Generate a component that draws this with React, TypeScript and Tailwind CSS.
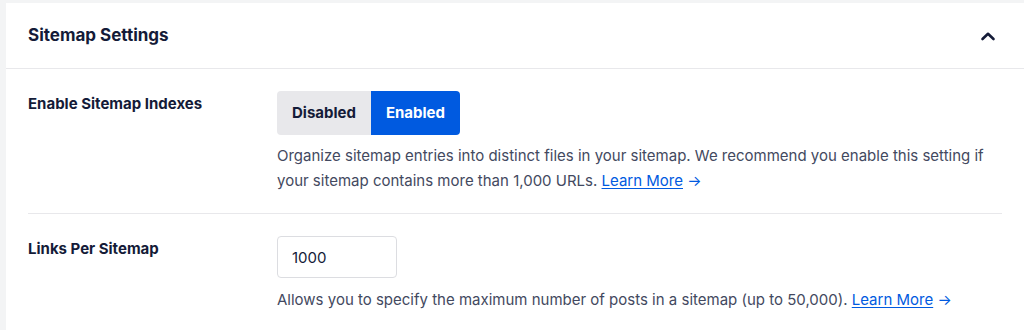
import React from 'react';

const font = { fontFamily: 'Inter, "Noto Sans", sans-serif' };

const LearnMore: React.FC = () => (
  <>
    <a href="#" className="text-[#005ae0] underline underline-offset-2">
      Learn More
    </a>{' '}
    <span className="text-[#005ae0]">→</span>
  </>
);

const SettingRow: React.FC<{ label: string; last?: boolean; children: React.ReactNode }> = ({
  label,
  last,
  children,
}) => (
  <div className={`grid grid-cols-[249px_1fr] ${last ? 'pt-[22px] pb-6' : 'pt-[22px] pb-5 border-b border-[#e8e8eb]'}`}>
    <div className="pt-[2px] text-[15px] leading-[22px] font-bold text-[#141b38]">{label}</div>
    <div>{children}</div>
  </div>
);

export default function App() {
  const [enabled, setEnabled] = React.useState(true);

  return (
    <div className="min-h-[330px] bg-[#f3f4f5] pl-[6px] pt-[3px]" style={font}>
      <div className="bg-white min-h-[327px]">
        {/* Header */}
        <div className="h-[66px] flex items-center justify-between px-[22px] border-b border-[#e8e8eb]">
          <h2 className="text-[17px] font-bold text-[#141b38]">Sitemap Settings</h2>
          <svg width="16" height="10" viewBox="0 0 16 10" fill="none" className="mr-[6px]">
            <path d="M2.5 8 L8 2.8 L13.5 8" stroke="#141b38" strokeWidth="2.6" strokeLinecap="round" strokeLinejoin="round" />
          </svg>
        </div>

        <div className="px-[22px]">
          <SettingRow label="Enable Sitemap Indexes">
            <div className="inline-flex h-[44px] rounded-[4px] overflow-hidden">
              <button
                onClick={() => setEnabled(false)}
                className={`px-[15px] text-[15px] font-bold ${enabled ? 'bg-[#e8e8eb] text-[#141b38]' : 'bg-[#005ae0] text-white'}`}
              >
                Disabled
              </button>
              <button
                onClick={() => setEnabled(true)}
                className={`px-[15px] text-[15px] font-bold ${enabled ? 'bg-[#005ae0] text-white' : 'bg-[#e8e8eb] text-[#141b38]'}`}
              >
                Enabled
              </button>
            </div>
            <p className="mt-[8px] text-[15px] leading-[25px] text-[#434960] max-w-[712px]">
              Organize sitemap entries into distinct files in your sitemap. We recommend you enable this setting if
              your sitemap contains more than 1,000 URLs. <LearnMore />
            </p>
          </SettingRow>

          <SettingRow label="Links Per Sitemap" last>
            <input
              type="text"
              defaultValue="1000"
              className="w-[120px] h-[42px] px-[14px] rounded-[4px] border border-[#dcdde1] text-[15px] text-[#141b38] outline-none"
            />
            <p className="mt-[9px] text-[15px] leading-[25px] text-[#434960]">
              Allows you to specify the maximum number of posts in a sitemap (up to 50,000). <LearnMore />
            </p>
          </SettingRow>
        </div>
      </div>
    </div>
  );
}
